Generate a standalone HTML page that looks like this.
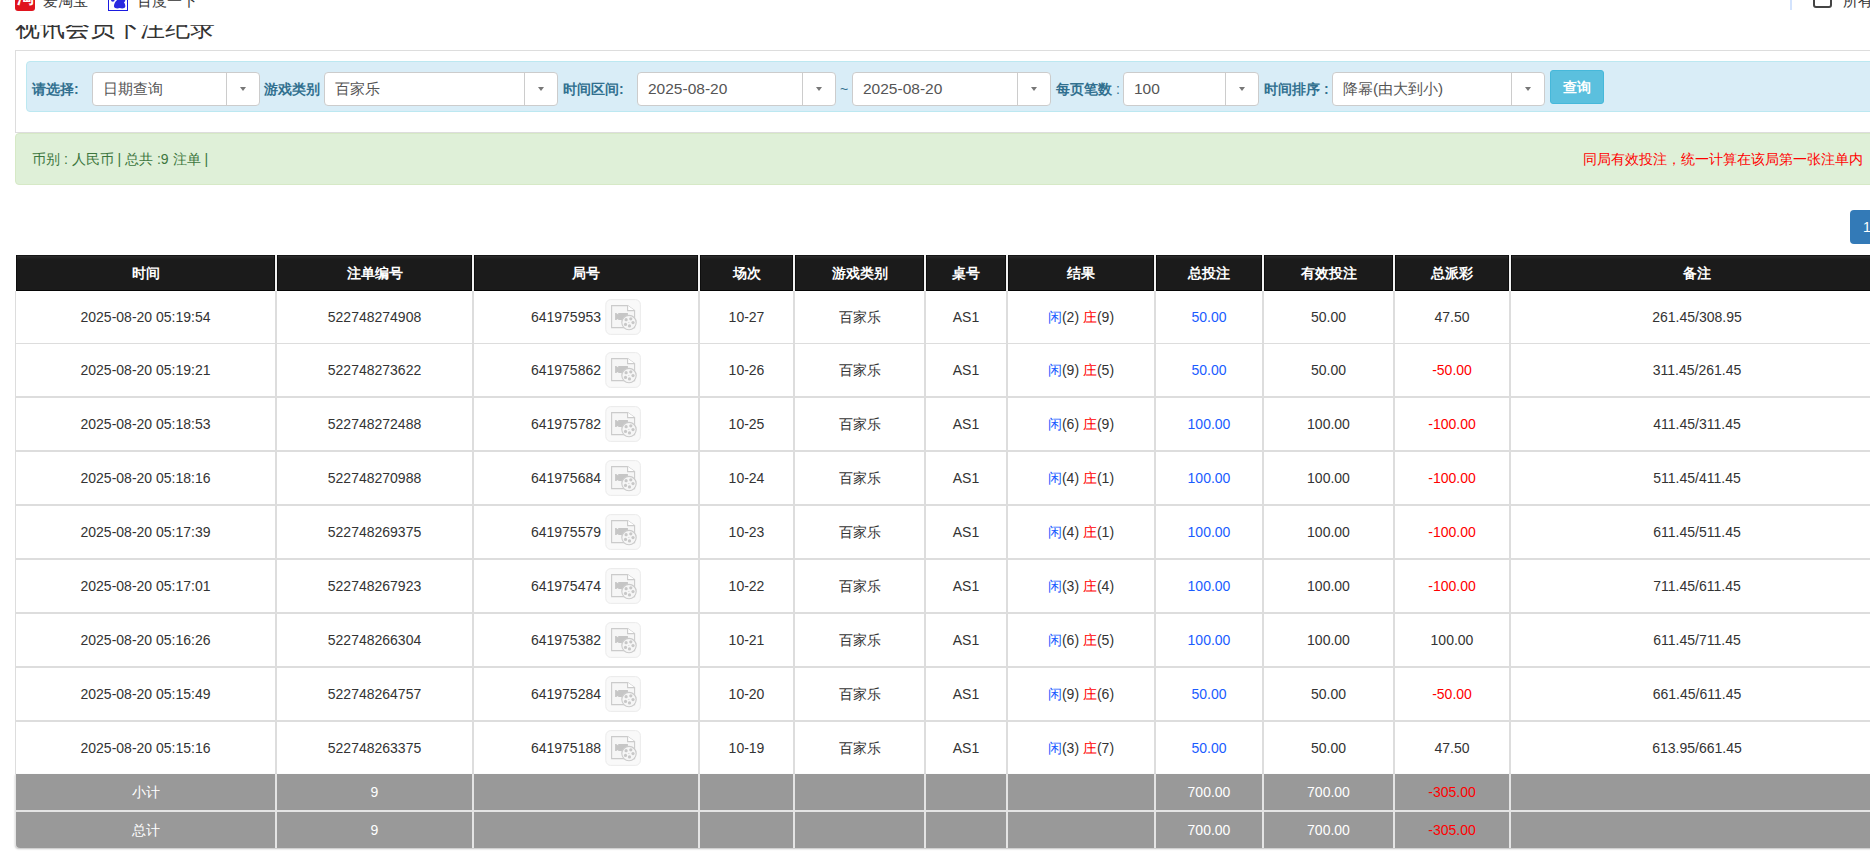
<!DOCTYPE html>
<html><head><meta charset="utf-8"><title>视讯会员下注纪录</title>
<style>
html,body{margin:0;padding:0;}
body{width:1870px;height:858px;overflow:hidden;position:relative;background:#fff;font-family:"Liberation Sans",sans-serif;color:#333;}
.a{position:absolute;}
.c{position:absolute;text-align:center;white-space:nowrap;}
.hd{background:linear-gradient(#161616 0,#161616 1px,#2c2c2c 1px,#222 3px,#1b1b1b 5px);box-shadow:inset 1px 0 #0e0e0e,inset -1px 0 #0e0e0e,inset 0 -1px #070707;color:#fff;font-weight:bold;font-size:14px;}
.cell{font-size:14px;color:#333;}
.gr{background:#999;color:#fff;font-size:14px;}
.sel{position:absolute;background:#fff;border:1px solid #ccc;border-radius:4px;box-sizing:border-box;font-size:15.5px;color:#555;}
.sel .t{position:absolute;left:10px;top:0;line-height:31px;}
.sel .dv{position:absolute;top:0;bottom:0;width:1px;background:#ccc;}
.sel .ar{position:absolute;top:14px;width:0;height:0;border-left:3.5px solid transparent;border-right:3.5px solid transparent;border-top:4px solid #777;}
.lb{position:absolute;font-size:14px;font-weight:bold;color:#31708f;white-space:nowrap;line-height:20px;}
.blue{color:#1a5cff;}
.red{color:#f00;}
</style></head><body>

<div class="a" style="left:15px;top:12px;font-size:25px;line-height:30px;color:#333;white-space:nowrap;">视讯会员下注纪录</div>
<div class="a" style="left:0;top:0;width:1870px;height:25px;background:#fff;"></div>
<div class="a" style="left:15px;top:-10px;width:20px;height:21px;background:#e0141e;border-radius:3px;overflow:hidden;"><div style="position:absolute;left:2px;top:-2px;font-size:17px;line-height:20px;color:#fff;font-weight:bold;">淘</div></div>
<div class="a" style="left:43px;top:-9px;font-size:15px;line-height:20px;color:#333;white-space:nowrap;">爱淘宝</div>
<svg class="a" style="left:104px;top:-10px" width="30" height="22" viewBox="0 0 30 22"><rect x="4.5" y="0.5" width="19" height="20" fill="#fff" stroke="#1a1ae0"/><path d="M15.5 9C18.5 9 21.8 14 21.3 16.5C20.8 18.6 18 18.8 15.8 18C13.5 18.8 10.6 18.6 10 16.5C9.6 14 12.5 9 15.5 9Z" fill="#2a2ae0"/><circle cx="8.8" cy="9.8" r="1.9" fill="#2a2ae0"/><circle cx="19.4" cy="10.3" r="1.9" fill="#2a2ae0"/><circle cx="12.5" cy="5.5" r="1.9" fill="#2a2ae0"/><circle cx="17.5" cy="5.5" r="1.9" fill="#2a2ae0"/></svg>
<div class="a" style="left:137px;top:-9px;font-size:15px;line-height:20px;color:#333;white-space:nowrap;">百度一下</div>
<div class="a" style="left:1790px;top:0;width:2px;height:10px;background:#d3e3fd;"></div>
<div class="a" style="left:1813px;top:-8.5px;width:15px;height:12px;border:2px solid #444;border-radius:3px;"></div>
<div class="a" style="left:1843px;top:-9px;font-size:15px;line-height:20px;color:#333;white-space:nowrap;">所有</div>
<div class="a" style="left:15px;top:50px;width:1900px;height:82px;border:1px solid #ddd;box-sizing:border-box;height:83px;"></div>
<div class="a" style="left:26px;top:61px;width:1900px;height:51px;background:#d9edf7;border:1px solid #bce8f1;border-radius:4px;box-sizing:border-box;"></div>
<div class="lb" style="left:32px;top:79px;">请选择:</div>
<div class="lb" style="left:264px;top:79px;">游戏类别</div>
<div class="lb" style="left:563px;top:79px;">时间区间:</div>
<div class="lb" style="left:840px;top:79px;font-weight:normal;">~</div>
<div class="lb" style="left:1056px;top:79px;">每页笔数 <span style="font-weight:normal">:</span></div>
<div class="lb" style="left:1264px;top:79px;">时间排序 :</div>
<div class="sel" style="left:92px;top:72px;width:168px;height:34px;font-size:15px;"><div class="t">日期查询</div><div class="dv" style="left:133px"></div><div class="ar" style="left:147px"></div></div>
<div class="sel" style="left:324px;top:72px;width:234px;height:34px;font-size:15px;"><div class="t">百家乐</div><div class="dv" style="left:199px"></div><div class="ar" style="left:213px"></div></div>
<div class="sel" style="left:637px;top:72px;width:199px;height:34px;font-size:15.5px;"><div class="t">2025-08-20</div><div class="dv" style="left:164px"></div><div class="ar" style="left:178px"></div></div>
<div class="sel" style="left:852px;top:72px;width:199px;height:34px;font-size:15.5px;"><div class="t">2025-08-20</div><div class="dv" style="left:164px"></div><div class="ar" style="left:178px"></div></div>
<div class="sel" style="left:1123px;top:72px;width:136px;height:34px;font-size:15.5px;"><div class="t">100</div><div class="dv" style="left:101px"></div><div class="ar" style="left:115px"></div></div>
<div class="sel" style="left:1332px;top:72px;width:213px;height:34px;font-size:15.25px;"><div class="t">降幂(由大到小)</div><div class="dv" style="left:178px"></div><div class="ar" style="left:192px"></div></div>
<div class="a" style="left:1550px;top:70px;width:54px;height:34px;background:#5bc0de;border:1px solid #46b8da;box-sizing:border-box;border-radius:3px;color:#fff;font-size:14px;font-weight:bold;line-height:32px;text-align:center;">查询</div>
<div class="a" style="left:15px;top:133px;width:1900px;height:52px;background:#dff0d8;border:1px solid #d6e9c6;border-radius:4px;box-sizing:border-box;"></div>
<div class="a" style="left:32px;top:149px;font-size:14px;line-height:20px;color:#3c763d;white-space:nowrap;">币别 : 人民币 | 总共 :9 注单 |</div>
<div class="a" style="left:1583px;top:149px;font-size:14px;line-height:20px;color:#f00;white-space:nowrap;">同局有效投注，统一计算在该局第一张注单内</div>
<div class="a" style="left:1850px;top:210px;width:40px;height:34px;background:#337ab7;border-radius:4px 0 0 4px;color:#fff;font-size:14px;line-height:34px;padding-left:13px;box-sizing:border-box;">1</div>
<div class="a" style="left:15px;top:291px;width:1900px;height:483px;background:#ddd;"></div>
<div class="a" style="left:16px;top:255px;width:1900px;height:36px;background:#f2f2f2;"></div>
<div class="c hd" style="left:16px;top:255px;width:259px;height:36px;line-height:36px;">时间</div>
<div class="c hd" style="left:277px;top:255px;width:195px;height:36px;line-height:36px;">注单编号</div>
<div class="c hd" style="left:474px;top:255px;width:224px;height:36px;line-height:36px;">局号</div>
<div class="c hd" style="left:700px;top:255px;width:93px;height:36px;line-height:36px;">场次</div>
<div class="c hd" style="left:795px;top:255px;width:129px;height:36px;line-height:36px;">游戏类别</div>
<div class="c hd" style="left:926px;top:255px;width:80px;height:36px;line-height:36px;">桌号</div>
<div class="c hd" style="left:1008px;top:255px;width:146px;height:36px;line-height:36px;">结果</div>
<div class="c hd" style="left:1156px;top:255px;width:106px;height:36px;line-height:36px;">总投注</div>
<div class="c hd" style="left:1264px;top:255px;width:129px;height:36px;line-height:36px;">有效投注</div>
<div class="c hd" style="left:1395px;top:255px;width:114px;height:36px;line-height:36px;">总派彩</div>
<div class="c hd" style="left:1511px;top:255px;width:372px;height:36px;line-height:36px;">备注</div>
<div class="c cell" style="left:16px;top:291px;width:259px;height:52px;line-height:52px;background:#fff;">2025-08-20 05:19:54</div>
<div class="c cell" style="left:277px;top:291px;width:195px;height:52px;line-height:52px;background:#fff;">522748274908</div>
<div class="c cell" style="left:474px;top:291px;width:224px;height:52px;background:#fff;"><div style="position:absolute;right:97px;top:0;line-height:52px;">641975953</div><div style="position:absolute;left:130px;top:7px;width:38px;height:38px;"><svg width="38" height="38" viewBox="0 0 38 38" style="position:absolute;left:0;top:0"><rect x="1.8" y="1.6" width="34.6" height="34.8" rx="5" fill="#f9f9f9" stroke="#ebebeb" stroke-width="1"/><path d="M7.6 7.6H23.6L30.6 12.6V29.6H7.6Z" fill="#f6f6f6" stroke="#cbcbcb" stroke-width="1.1"/><path d="M23.6 7.6V12.6H30.6" fill="#fff" stroke="#cbcbcb" stroke-width="1.1"/><path d="M11.1 15H12.2L14.2 16.4V15H23.9V22.1H14.2V20.7L12.2 22.1H11.1Z" fill="#c6c6c6"/><circle cx="25" cy="24.6" r="7.2" fill="#f6f6f6" stroke="#cbcbcb" stroke-width="1.1"/><circle cx="22.1" cy="21.7" r="1.6" fill="#c8c8c8"/><circle cx="26.8" cy="20.8" r="1.6" fill="#c8c8c8"/><circle cx="29" cy="24.6" r="1.6" fill="#c8c8c8"/><circle cx="25.5" cy="27.9" r="1.6" fill="#c8c8c8"/><circle cx="21.5" cy="26.4" r="1.6" fill="#c8c8c8"/><circle cx="24.9" cy="24.4" r="0.5" fill="#c8c8c8"/></svg></div></div>
<div class="c cell" style="left:700px;top:291px;width:93px;height:52px;line-height:52px;background:#fff;">10-27</div>
<div class="c cell" style="left:795px;top:291px;width:129px;height:52px;line-height:52px;background:#fff;">百家乐</div>
<div class="c cell" style="left:926px;top:291px;width:80px;height:52px;line-height:52px;background:#fff;">AS1</div>
<div class="c cell" style="left:1008px;top:291px;width:146px;height:52px;line-height:52px;background:#fff;"><span class="blue">闲</span>(2) <span class="red">庄</span>(9)</div>
<div class="c cell" style="left:1156px;top:291px;width:106px;height:52px;line-height:52px;background:#fff;"><span class="blue">50.00</span></div>
<div class="c cell" style="left:1264px;top:291px;width:129px;height:52px;line-height:52px;background:#fff;">50.00</div>
<div class="c cell" style="left:1395px;top:291px;width:114px;height:52px;line-height:52px;background:#fff;">47.50</div>
<div class="c cell" style="left:1511px;top:291px;width:372px;height:52px;line-height:52px;background:#fff;">261.45/308.95</div>
<div class="c cell" style="left:16px;top:344px;width:259px;height:52px;line-height:52px;background:#fff;">2025-08-20 05:19:21</div>
<div class="c cell" style="left:277px;top:344px;width:195px;height:52px;line-height:52px;background:#fff;">522748273622</div>
<div class="c cell" style="left:474px;top:344px;width:224px;height:52px;background:#fff;"><div style="position:absolute;right:97px;top:0;line-height:52px;">641975862</div><div style="position:absolute;left:130px;top:7px;width:38px;height:38px;"><svg width="38" height="38" viewBox="0 0 38 38" style="position:absolute;left:0;top:0"><rect x="1.8" y="1.6" width="34.6" height="34.8" rx="5" fill="#f9f9f9" stroke="#ebebeb" stroke-width="1"/><path d="M7.6 7.6H23.6L30.6 12.6V29.6H7.6Z" fill="#f6f6f6" stroke="#cbcbcb" stroke-width="1.1"/><path d="M23.6 7.6V12.6H30.6" fill="#fff" stroke="#cbcbcb" stroke-width="1.1"/><path d="M11.1 15H12.2L14.2 16.4V15H23.9V22.1H14.2V20.7L12.2 22.1H11.1Z" fill="#c6c6c6"/><circle cx="25" cy="24.6" r="7.2" fill="#f6f6f6" stroke="#cbcbcb" stroke-width="1.1"/><circle cx="22.1" cy="21.7" r="1.6" fill="#c8c8c8"/><circle cx="26.8" cy="20.8" r="1.6" fill="#c8c8c8"/><circle cx="29" cy="24.6" r="1.6" fill="#c8c8c8"/><circle cx="25.5" cy="27.9" r="1.6" fill="#c8c8c8"/><circle cx="21.5" cy="26.4" r="1.6" fill="#c8c8c8"/><circle cx="24.9" cy="24.4" r="0.5" fill="#c8c8c8"/></svg></div></div>
<div class="c cell" style="left:700px;top:344px;width:93px;height:52px;line-height:52px;background:#fff;">10-26</div>
<div class="c cell" style="left:795px;top:344px;width:129px;height:52px;line-height:52px;background:#fff;">百家乐</div>
<div class="c cell" style="left:926px;top:344px;width:80px;height:52px;line-height:52px;background:#fff;">AS1</div>
<div class="c cell" style="left:1008px;top:344px;width:146px;height:52px;line-height:52px;background:#fff;"><span class="blue">闲</span>(9) <span class="red">庄</span>(5)</div>
<div class="c cell" style="left:1156px;top:344px;width:106px;height:52px;line-height:52px;background:#fff;"><span class="blue">50.00</span></div>
<div class="c cell" style="left:1264px;top:344px;width:129px;height:52px;line-height:52px;background:#fff;">50.00</div>
<div class="c cell" style="left:1395px;top:344px;width:114px;height:52px;line-height:52px;background:#fff;"><span class="red">-50.00</span></div>
<div class="c cell" style="left:1511px;top:344px;width:372px;height:52px;line-height:52px;background:#fff;">311.45/261.45</div>
<div class="c cell" style="left:16px;top:398px;width:259px;height:52px;line-height:52px;background:#fff;">2025-08-20 05:18:53</div>
<div class="c cell" style="left:277px;top:398px;width:195px;height:52px;line-height:52px;background:#fff;">522748272488</div>
<div class="c cell" style="left:474px;top:398px;width:224px;height:52px;background:#fff;"><div style="position:absolute;right:97px;top:0;line-height:52px;">641975782</div><div style="position:absolute;left:130px;top:7px;width:38px;height:38px;"><svg width="38" height="38" viewBox="0 0 38 38" style="position:absolute;left:0;top:0"><rect x="1.8" y="1.6" width="34.6" height="34.8" rx="5" fill="#f9f9f9" stroke="#ebebeb" stroke-width="1"/><path d="M7.6 7.6H23.6L30.6 12.6V29.6H7.6Z" fill="#f6f6f6" stroke="#cbcbcb" stroke-width="1.1"/><path d="M23.6 7.6V12.6H30.6" fill="#fff" stroke="#cbcbcb" stroke-width="1.1"/><path d="M11.1 15H12.2L14.2 16.4V15H23.9V22.1H14.2V20.7L12.2 22.1H11.1Z" fill="#c6c6c6"/><circle cx="25" cy="24.6" r="7.2" fill="#f6f6f6" stroke="#cbcbcb" stroke-width="1.1"/><circle cx="22.1" cy="21.7" r="1.6" fill="#c8c8c8"/><circle cx="26.8" cy="20.8" r="1.6" fill="#c8c8c8"/><circle cx="29" cy="24.6" r="1.6" fill="#c8c8c8"/><circle cx="25.5" cy="27.9" r="1.6" fill="#c8c8c8"/><circle cx="21.5" cy="26.4" r="1.6" fill="#c8c8c8"/><circle cx="24.9" cy="24.4" r="0.5" fill="#c8c8c8"/></svg></div></div>
<div class="c cell" style="left:700px;top:398px;width:93px;height:52px;line-height:52px;background:#fff;">10-25</div>
<div class="c cell" style="left:795px;top:398px;width:129px;height:52px;line-height:52px;background:#fff;">百家乐</div>
<div class="c cell" style="left:926px;top:398px;width:80px;height:52px;line-height:52px;background:#fff;">AS1</div>
<div class="c cell" style="left:1008px;top:398px;width:146px;height:52px;line-height:52px;background:#fff;"><span class="blue">闲</span>(6) <span class="red">庄</span>(9)</div>
<div class="c cell" style="left:1156px;top:398px;width:106px;height:52px;line-height:52px;background:#fff;"><span class="blue">100.00</span></div>
<div class="c cell" style="left:1264px;top:398px;width:129px;height:52px;line-height:52px;background:#fff;">100.00</div>
<div class="c cell" style="left:1395px;top:398px;width:114px;height:52px;line-height:52px;background:#fff;"><span class="red">-100.00</span></div>
<div class="c cell" style="left:1511px;top:398px;width:372px;height:52px;line-height:52px;background:#fff;">411.45/311.45</div>
<div class="c cell" style="left:16px;top:452px;width:259px;height:52px;line-height:52px;background:#fff;">2025-08-20 05:18:16</div>
<div class="c cell" style="left:277px;top:452px;width:195px;height:52px;line-height:52px;background:#fff;">522748270988</div>
<div class="c cell" style="left:474px;top:452px;width:224px;height:52px;background:#fff;"><div style="position:absolute;right:97px;top:0;line-height:52px;">641975684</div><div style="position:absolute;left:130px;top:7px;width:38px;height:38px;"><svg width="38" height="38" viewBox="0 0 38 38" style="position:absolute;left:0;top:0"><rect x="1.8" y="1.6" width="34.6" height="34.8" rx="5" fill="#f9f9f9" stroke="#ebebeb" stroke-width="1"/><path d="M7.6 7.6H23.6L30.6 12.6V29.6H7.6Z" fill="#f6f6f6" stroke="#cbcbcb" stroke-width="1.1"/><path d="M23.6 7.6V12.6H30.6" fill="#fff" stroke="#cbcbcb" stroke-width="1.1"/><path d="M11.1 15H12.2L14.2 16.4V15H23.9V22.1H14.2V20.7L12.2 22.1H11.1Z" fill="#c6c6c6"/><circle cx="25" cy="24.6" r="7.2" fill="#f6f6f6" stroke="#cbcbcb" stroke-width="1.1"/><circle cx="22.1" cy="21.7" r="1.6" fill="#c8c8c8"/><circle cx="26.8" cy="20.8" r="1.6" fill="#c8c8c8"/><circle cx="29" cy="24.6" r="1.6" fill="#c8c8c8"/><circle cx="25.5" cy="27.9" r="1.6" fill="#c8c8c8"/><circle cx="21.5" cy="26.4" r="1.6" fill="#c8c8c8"/><circle cx="24.9" cy="24.4" r="0.5" fill="#c8c8c8"/></svg></div></div>
<div class="c cell" style="left:700px;top:452px;width:93px;height:52px;line-height:52px;background:#fff;">10-24</div>
<div class="c cell" style="left:795px;top:452px;width:129px;height:52px;line-height:52px;background:#fff;">百家乐</div>
<div class="c cell" style="left:926px;top:452px;width:80px;height:52px;line-height:52px;background:#fff;">AS1</div>
<div class="c cell" style="left:1008px;top:452px;width:146px;height:52px;line-height:52px;background:#fff;"><span class="blue">闲</span>(4) <span class="red">庄</span>(1)</div>
<div class="c cell" style="left:1156px;top:452px;width:106px;height:52px;line-height:52px;background:#fff;"><span class="blue">100.00</span></div>
<div class="c cell" style="left:1264px;top:452px;width:129px;height:52px;line-height:52px;background:#fff;">100.00</div>
<div class="c cell" style="left:1395px;top:452px;width:114px;height:52px;line-height:52px;background:#fff;"><span class="red">-100.00</span></div>
<div class="c cell" style="left:1511px;top:452px;width:372px;height:52px;line-height:52px;background:#fff;">511.45/411.45</div>
<div class="c cell" style="left:16px;top:506px;width:259px;height:52px;line-height:52px;background:#fff;">2025-08-20 05:17:39</div>
<div class="c cell" style="left:277px;top:506px;width:195px;height:52px;line-height:52px;background:#fff;">522748269375</div>
<div class="c cell" style="left:474px;top:506px;width:224px;height:52px;background:#fff;"><div style="position:absolute;right:97px;top:0;line-height:52px;">641975579</div><div style="position:absolute;left:130px;top:7px;width:38px;height:38px;"><svg width="38" height="38" viewBox="0 0 38 38" style="position:absolute;left:0;top:0"><rect x="1.8" y="1.6" width="34.6" height="34.8" rx="5" fill="#f9f9f9" stroke="#ebebeb" stroke-width="1"/><path d="M7.6 7.6H23.6L30.6 12.6V29.6H7.6Z" fill="#f6f6f6" stroke="#cbcbcb" stroke-width="1.1"/><path d="M23.6 7.6V12.6H30.6" fill="#fff" stroke="#cbcbcb" stroke-width="1.1"/><path d="M11.1 15H12.2L14.2 16.4V15H23.9V22.1H14.2V20.7L12.2 22.1H11.1Z" fill="#c6c6c6"/><circle cx="25" cy="24.6" r="7.2" fill="#f6f6f6" stroke="#cbcbcb" stroke-width="1.1"/><circle cx="22.1" cy="21.7" r="1.6" fill="#c8c8c8"/><circle cx="26.8" cy="20.8" r="1.6" fill="#c8c8c8"/><circle cx="29" cy="24.6" r="1.6" fill="#c8c8c8"/><circle cx="25.5" cy="27.9" r="1.6" fill="#c8c8c8"/><circle cx="21.5" cy="26.4" r="1.6" fill="#c8c8c8"/><circle cx="24.9" cy="24.4" r="0.5" fill="#c8c8c8"/></svg></div></div>
<div class="c cell" style="left:700px;top:506px;width:93px;height:52px;line-height:52px;background:#fff;">10-23</div>
<div class="c cell" style="left:795px;top:506px;width:129px;height:52px;line-height:52px;background:#fff;">百家乐</div>
<div class="c cell" style="left:926px;top:506px;width:80px;height:52px;line-height:52px;background:#fff;">AS1</div>
<div class="c cell" style="left:1008px;top:506px;width:146px;height:52px;line-height:52px;background:#fff;"><span class="blue">闲</span>(4) <span class="red">庄</span>(1)</div>
<div class="c cell" style="left:1156px;top:506px;width:106px;height:52px;line-height:52px;background:#fff;"><span class="blue">100.00</span></div>
<div class="c cell" style="left:1264px;top:506px;width:129px;height:52px;line-height:52px;background:#fff;">100.00</div>
<div class="c cell" style="left:1395px;top:506px;width:114px;height:52px;line-height:52px;background:#fff;"><span class="red">-100.00</span></div>
<div class="c cell" style="left:1511px;top:506px;width:372px;height:52px;line-height:52px;background:#fff;">611.45/511.45</div>
<div class="c cell" style="left:16px;top:560px;width:259px;height:52px;line-height:52px;background:#fff;">2025-08-20 05:17:01</div>
<div class="c cell" style="left:277px;top:560px;width:195px;height:52px;line-height:52px;background:#fff;">522748267923</div>
<div class="c cell" style="left:474px;top:560px;width:224px;height:52px;background:#fff;"><div style="position:absolute;right:97px;top:0;line-height:52px;">641975474</div><div style="position:absolute;left:130px;top:7px;width:38px;height:38px;"><svg width="38" height="38" viewBox="0 0 38 38" style="position:absolute;left:0;top:0"><rect x="1.8" y="1.6" width="34.6" height="34.8" rx="5" fill="#f9f9f9" stroke="#ebebeb" stroke-width="1"/><path d="M7.6 7.6H23.6L30.6 12.6V29.6H7.6Z" fill="#f6f6f6" stroke="#cbcbcb" stroke-width="1.1"/><path d="M23.6 7.6V12.6H30.6" fill="#fff" stroke="#cbcbcb" stroke-width="1.1"/><path d="M11.1 15H12.2L14.2 16.4V15H23.9V22.1H14.2V20.7L12.2 22.1H11.1Z" fill="#c6c6c6"/><circle cx="25" cy="24.6" r="7.2" fill="#f6f6f6" stroke="#cbcbcb" stroke-width="1.1"/><circle cx="22.1" cy="21.7" r="1.6" fill="#c8c8c8"/><circle cx="26.8" cy="20.8" r="1.6" fill="#c8c8c8"/><circle cx="29" cy="24.6" r="1.6" fill="#c8c8c8"/><circle cx="25.5" cy="27.9" r="1.6" fill="#c8c8c8"/><circle cx="21.5" cy="26.4" r="1.6" fill="#c8c8c8"/><circle cx="24.9" cy="24.4" r="0.5" fill="#c8c8c8"/></svg></div></div>
<div class="c cell" style="left:700px;top:560px;width:93px;height:52px;line-height:52px;background:#fff;">10-22</div>
<div class="c cell" style="left:795px;top:560px;width:129px;height:52px;line-height:52px;background:#fff;">百家乐</div>
<div class="c cell" style="left:926px;top:560px;width:80px;height:52px;line-height:52px;background:#fff;">AS1</div>
<div class="c cell" style="left:1008px;top:560px;width:146px;height:52px;line-height:52px;background:#fff;"><span class="blue">闲</span>(3) <span class="red">庄</span>(4)</div>
<div class="c cell" style="left:1156px;top:560px;width:106px;height:52px;line-height:52px;background:#fff;"><span class="blue">100.00</span></div>
<div class="c cell" style="left:1264px;top:560px;width:129px;height:52px;line-height:52px;background:#fff;">100.00</div>
<div class="c cell" style="left:1395px;top:560px;width:114px;height:52px;line-height:52px;background:#fff;"><span class="red">-100.00</span></div>
<div class="c cell" style="left:1511px;top:560px;width:372px;height:52px;line-height:52px;background:#fff;">711.45/611.45</div>
<div class="c cell" style="left:16px;top:614px;width:259px;height:52px;line-height:52px;background:#fff;">2025-08-20 05:16:26</div>
<div class="c cell" style="left:277px;top:614px;width:195px;height:52px;line-height:52px;background:#fff;">522748266304</div>
<div class="c cell" style="left:474px;top:614px;width:224px;height:52px;background:#fff;"><div style="position:absolute;right:97px;top:0;line-height:52px;">641975382</div><div style="position:absolute;left:130px;top:7px;width:38px;height:38px;"><svg width="38" height="38" viewBox="0 0 38 38" style="position:absolute;left:0;top:0"><rect x="1.8" y="1.6" width="34.6" height="34.8" rx="5" fill="#f9f9f9" stroke="#ebebeb" stroke-width="1"/><path d="M7.6 7.6H23.6L30.6 12.6V29.6H7.6Z" fill="#f6f6f6" stroke="#cbcbcb" stroke-width="1.1"/><path d="M23.6 7.6V12.6H30.6" fill="#fff" stroke="#cbcbcb" stroke-width="1.1"/><path d="M11.1 15H12.2L14.2 16.4V15H23.9V22.1H14.2V20.7L12.2 22.1H11.1Z" fill="#c6c6c6"/><circle cx="25" cy="24.6" r="7.2" fill="#f6f6f6" stroke="#cbcbcb" stroke-width="1.1"/><circle cx="22.1" cy="21.7" r="1.6" fill="#c8c8c8"/><circle cx="26.8" cy="20.8" r="1.6" fill="#c8c8c8"/><circle cx="29" cy="24.6" r="1.6" fill="#c8c8c8"/><circle cx="25.5" cy="27.9" r="1.6" fill="#c8c8c8"/><circle cx="21.5" cy="26.4" r="1.6" fill="#c8c8c8"/><circle cx="24.9" cy="24.4" r="0.5" fill="#c8c8c8"/></svg></div></div>
<div class="c cell" style="left:700px;top:614px;width:93px;height:52px;line-height:52px;background:#fff;">10-21</div>
<div class="c cell" style="left:795px;top:614px;width:129px;height:52px;line-height:52px;background:#fff;">百家乐</div>
<div class="c cell" style="left:926px;top:614px;width:80px;height:52px;line-height:52px;background:#fff;">AS1</div>
<div class="c cell" style="left:1008px;top:614px;width:146px;height:52px;line-height:52px;background:#fff;"><span class="blue">闲</span>(6) <span class="red">庄</span>(5)</div>
<div class="c cell" style="left:1156px;top:614px;width:106px;height:52px;line-height:52px;background:#fff;"><span class="blue">100.00</span></div>
<div class="c cell" style="left:1264px;top:614px;width:129px;height:52px;line-height:52px;background:#fff;">100.00</div>
<div class="c cell" style="left:1395px;top:614px;width:114px;height:52px;line-height:52px;background:#fff;">100.00</div>
<div class="c cell" style="left:1511px;top:614px;width:372px;height:52px;line-height:52px;background:#fff;">611.45/711.45</div>
<div class="c cell" style="left:16px;top:668px;width:259px;height:52px;line-height:52px;background:#fff;">2025-08-20 05:15:49</div>
<div class="c cell" style="left:277px;top:668px;width:195px;height:52px;line-height:52px;background:#fff;">522748264757</div>
<div class="c cell" style="left:474px;top:668px;width:224px;height:52px;background:#fff;"><div style="position:absolute;right:97px;top:0;line-height:52px;">641975284</div><div style="position:absolute;left:130px;top:7px;width:38px;height:38px;"><svg width="38" height="38" viewBox="0 0 38 38" style="position:absolute;left:0;top:0"><rect x="1.8" y="1.6" width="34.6" height="34.8" rx="5" fill="#f9f9f9" stroke="#ebebeb" stroke-width="1"/><path d="M7.6 7.6H23.6L30.6 12.6V29.6H7.6Z" fill="#f6f6f6" stroke="#cbcbcb" stroke-width="1.1"/><path d="M23.6 7.6V12.6H30.6" fill="#fff" stroke="#cbcbcb" stroke-width="1.1"/><path d="M11.1 15H12.2L14.2 16.4V15H23.9V22.1H14.2V20.7L12.2 22.1H11.1Z" fill="#c6c6c6"/><circle cx="25" cy="24.6" r="7.2" fill="#f6f6f6" stroke="#cbcbcb" stroke-width="1.1"/><circle cx="22.1" cy="21.7" r="1.6" fill="#c8c8c8"/><circle cx="26.8" cy="20.8" r="1.6" fill="#c8c8c8"/><circle cx="29" cy="24.6" r="1.6" fill="#c8c8c8"/><circle cx="25.5" cy="27.9" r="1.6" fill="#c8c8c8"/><circle cx="21.5" cy="26.4" r="1.6" fill="#c8c8c8"/><circle cx="24.9" cy="24.4" r="0.5" fill="#c8c8c8"/></svg></div></div>
<div class="c cell" style="left:700px;top:668px;width:93px;height:52px;line-height:52px;background:#fff;">10-20</div>
<div class="c cell" style="left:795px;top:668px;width:129px;height:52px;line-height:52px;background:#fff;">百家乐</div>
<div class="c cell" style="left:926px;top:668px;width:80px;height:52px;line-height:52px;background:#fff;">AS1</div>
<div class="c cell" style="left:1008px;top:668px;width:146px;height:52px;line-height:52px;background:#fff;"><span class="blue">闲</span>(9) <span class="red">庄</span>(6)</div>
<div class="c cell" style="left:1156px;top:668px;width:106px;height:52px;line-height:52px;background:#fff;"><span class="blue">50.00</span></div>
<div class="c cell" style="left:1264px;top:668px;width:129px;height:52px;line-height:52px;background:#fff;">50.00</div>
<div class="c cell" style="left:1395px;top:668px;width:114px;height:52px;line-height:52px;background:#fff;"><span class="red">-50.00</span></div>
<div class="c cell" style="left:1511px;top:668px;width:372px;height:52px;line-height:52px;background:#fff;">661.45/611.45</div>
<div class="c cell" style="left:16px;top:722px;width:259px;height:52px;line-height:52px;background:#fff;">2025-08-20 05:15:16</div>
<div class="c cell" style="left:277px;top:722px;width:195px;height:52px;line-height:52px;background:#fff;">522748263375</div>
<div class="c cell" style="left:474px;top:722px;width:224px;height:52px;background:#fff;"><div style="position:absolute;right:97px;top:0;line-height:52px;">641975188</div><div style="position:absolute;left:130px;top:7px;width:38px;height:38px;"><svg width="38" height="38" viewBox="0 0 38 38" style="position:absolute;left:0;top:0"><rect x="1.8" y="1.6" width="34.6" height="34.8" rx="5" fill="#f9f9f9" stroke="#ebebeb" stroke-width="1"/><path d="M7.6 7.6H23.6L30.6 12.6V29.6H7.6Z" fill="#f6f6f6" stroke="#cbcbcb" stroke-width="1.1"/><path d="M23.6 7.6V12.6H30.6" fill="#fff" stroke="#cbcbcb" stroke-width="1.1"/><path d="M11.1 15H12.2L14.2 16.4V15H23.9V22.1H14.2V20.7L12.2 22.1H11.1Z" fill="#c6c6c6"/><circle cx="25" cy="24.6" r="7.2" fill="#f6f6f6" stroke="#cbcbcb" stroke-width="1.1"/><circle cx="22.1" cy="21.7" r="1.6" fill="#c8c8c8"/><circle cx="26.8" cy="20.8" r="1.6" fill="#c8c8c8"/><circle cx="29" cy="24.6" r="1.6" fill="#c8c8c8"/><circle cx="25.5" cy="27.9" r="1.6" fill="#c8c8c8"/><circle cx="21.5" cy="26.4" r="1.6" fill="#c8c8c8"/><circle cx="24.9" cy="24.4" r="0.5" fill="#c8c8c8"/></svg></div></div>
<div class="c cell" style="left:700px;top:722px;width:93px;height:52px;line-height:52px;background:#fff;">10-19</div>
<div class="c cell" style="left:795px;top:722px;width:129px;height:52px;line-height:52px;background:#fff;">百家乐</div>
<div class="c cell" style="left:926px;top:722px;width:80px;height:52px;line-height:52px;background:#fff;">AS1</div>
<div class="c cell" style="left:1008px;top:722px;width:146px;height:52px;line-height:52px;background:#fff;"><span class="blue">闲</span>(3) <span class="red">庄</span>(7)</div>
<div class="c cell" style="left:1156px;top:722px;width:106px;height:52px;line-height:52px;background:#fff;"><span class="blue">50.00</span></div>
<div class="c cell" style="left:1264px;top:722px;width:129px;height:52px;line-height:52px;background:#fff;">50.00</div>
<div class="c cell" style="left:1395px;top:722px;width:114px;height:52px;line-height:52px;background:#fff;">47.50</div>
<div class="c cell" style="left:1511px;top:722px;width:372px;height:52px;line-height:52px;background:#fff;">613.95/661.45</div>
<div class="a" style="left:15px;top:774px;width:1868px;height:74px;background:#e4e4e4;border-radius:0 0 0 4px;box-shadow:0 1px 2px rgba(0,0,0,.25);"></div>
<div class="c gr" style="left:16px;top:774px;width:259px;height:36px;line-height:36px;">小计</div>
<div class="c gr" style="left:277px;top:774px;width:195px;height:36px;line-height:36px;">9</div>
<div class="c gr" style="left:474px;top:774px;width:224px;height:36px;line-height:36px;"></div>
<div class="c gr" style="left:700px;top:774px;width:93px;height:36px;line-height:36px;"></div>
<div class="c gr" style="left:795px;top:774px;width:129px;height:36px;line-height:36px;"></div>
<div class="c gr" style="left:926px;top:774px;width:80px;height:36px;line-height:36px;"></div>
<div class="c gr" style="left:1008px;top:774px;width:146px;height:36px;line-height:36px;"></div>
<div class="c gr" style="left:1156px;top:774px;width:106px;height:36px;line-height:36px;">700.00</div>
<div class="c gr" style="left:1264px;top:774px;width:129px;height:36px;line-height:36px;">700.00</div>
<div class="c gr" style="left:1395px;top:774px;width:114px;height:36px;line-height:36px;"><span class="red">-305.00</span></div>
<div class="c gr" style="left:1511px;top:774px;width:372px;height:36px;line-height:36px;"></div>
<div class="c gr" style="left:16px;top:812px;width:259px;height:36px;line-height:36px;border-radius:0 0 0 4px;">总计</div>
<div class="c gr" style="left:277px;top:812px;width:195px;height:36px;line-height:36px;">9</div>
<div class="c gr" style="left:474px;top:812px;width:224px;height:36px;line-height:36px;"></div>
<div class="c gr" style="left:700px;top:812px;width:93px;height:36px;line-height:36px;"></div>
<div class="c gr" style="left:795px;top:812px;width:129px;height:36px;line-height:36px;"></div>
<div class="c gr" style="left:926px;top:812px;width:80px;height:36px;line-height:36px;"></div>
<div class="c gr" style="left:1008px;top:812px;width:146px;height:36px;line-height:36px;"></div>
<div class="c gr" style="left:1156px;top:812px;width:106px;height:36px;line-height:36px;">700.00</div>
<div class="c gr" style="left:1264px;top:812px;width:129px;height:36px;line-height:36px;">700.00</div>
<div class="c gr" style="left:1395px;top:812px;width:114px;height:36px;line-height:36px;"><span class="red">-305.00</span></div>
<div class="c gr" style="left:1511px;top:812px;width:372px;height:36px;line-height:36px;"></div>
</body></html>
